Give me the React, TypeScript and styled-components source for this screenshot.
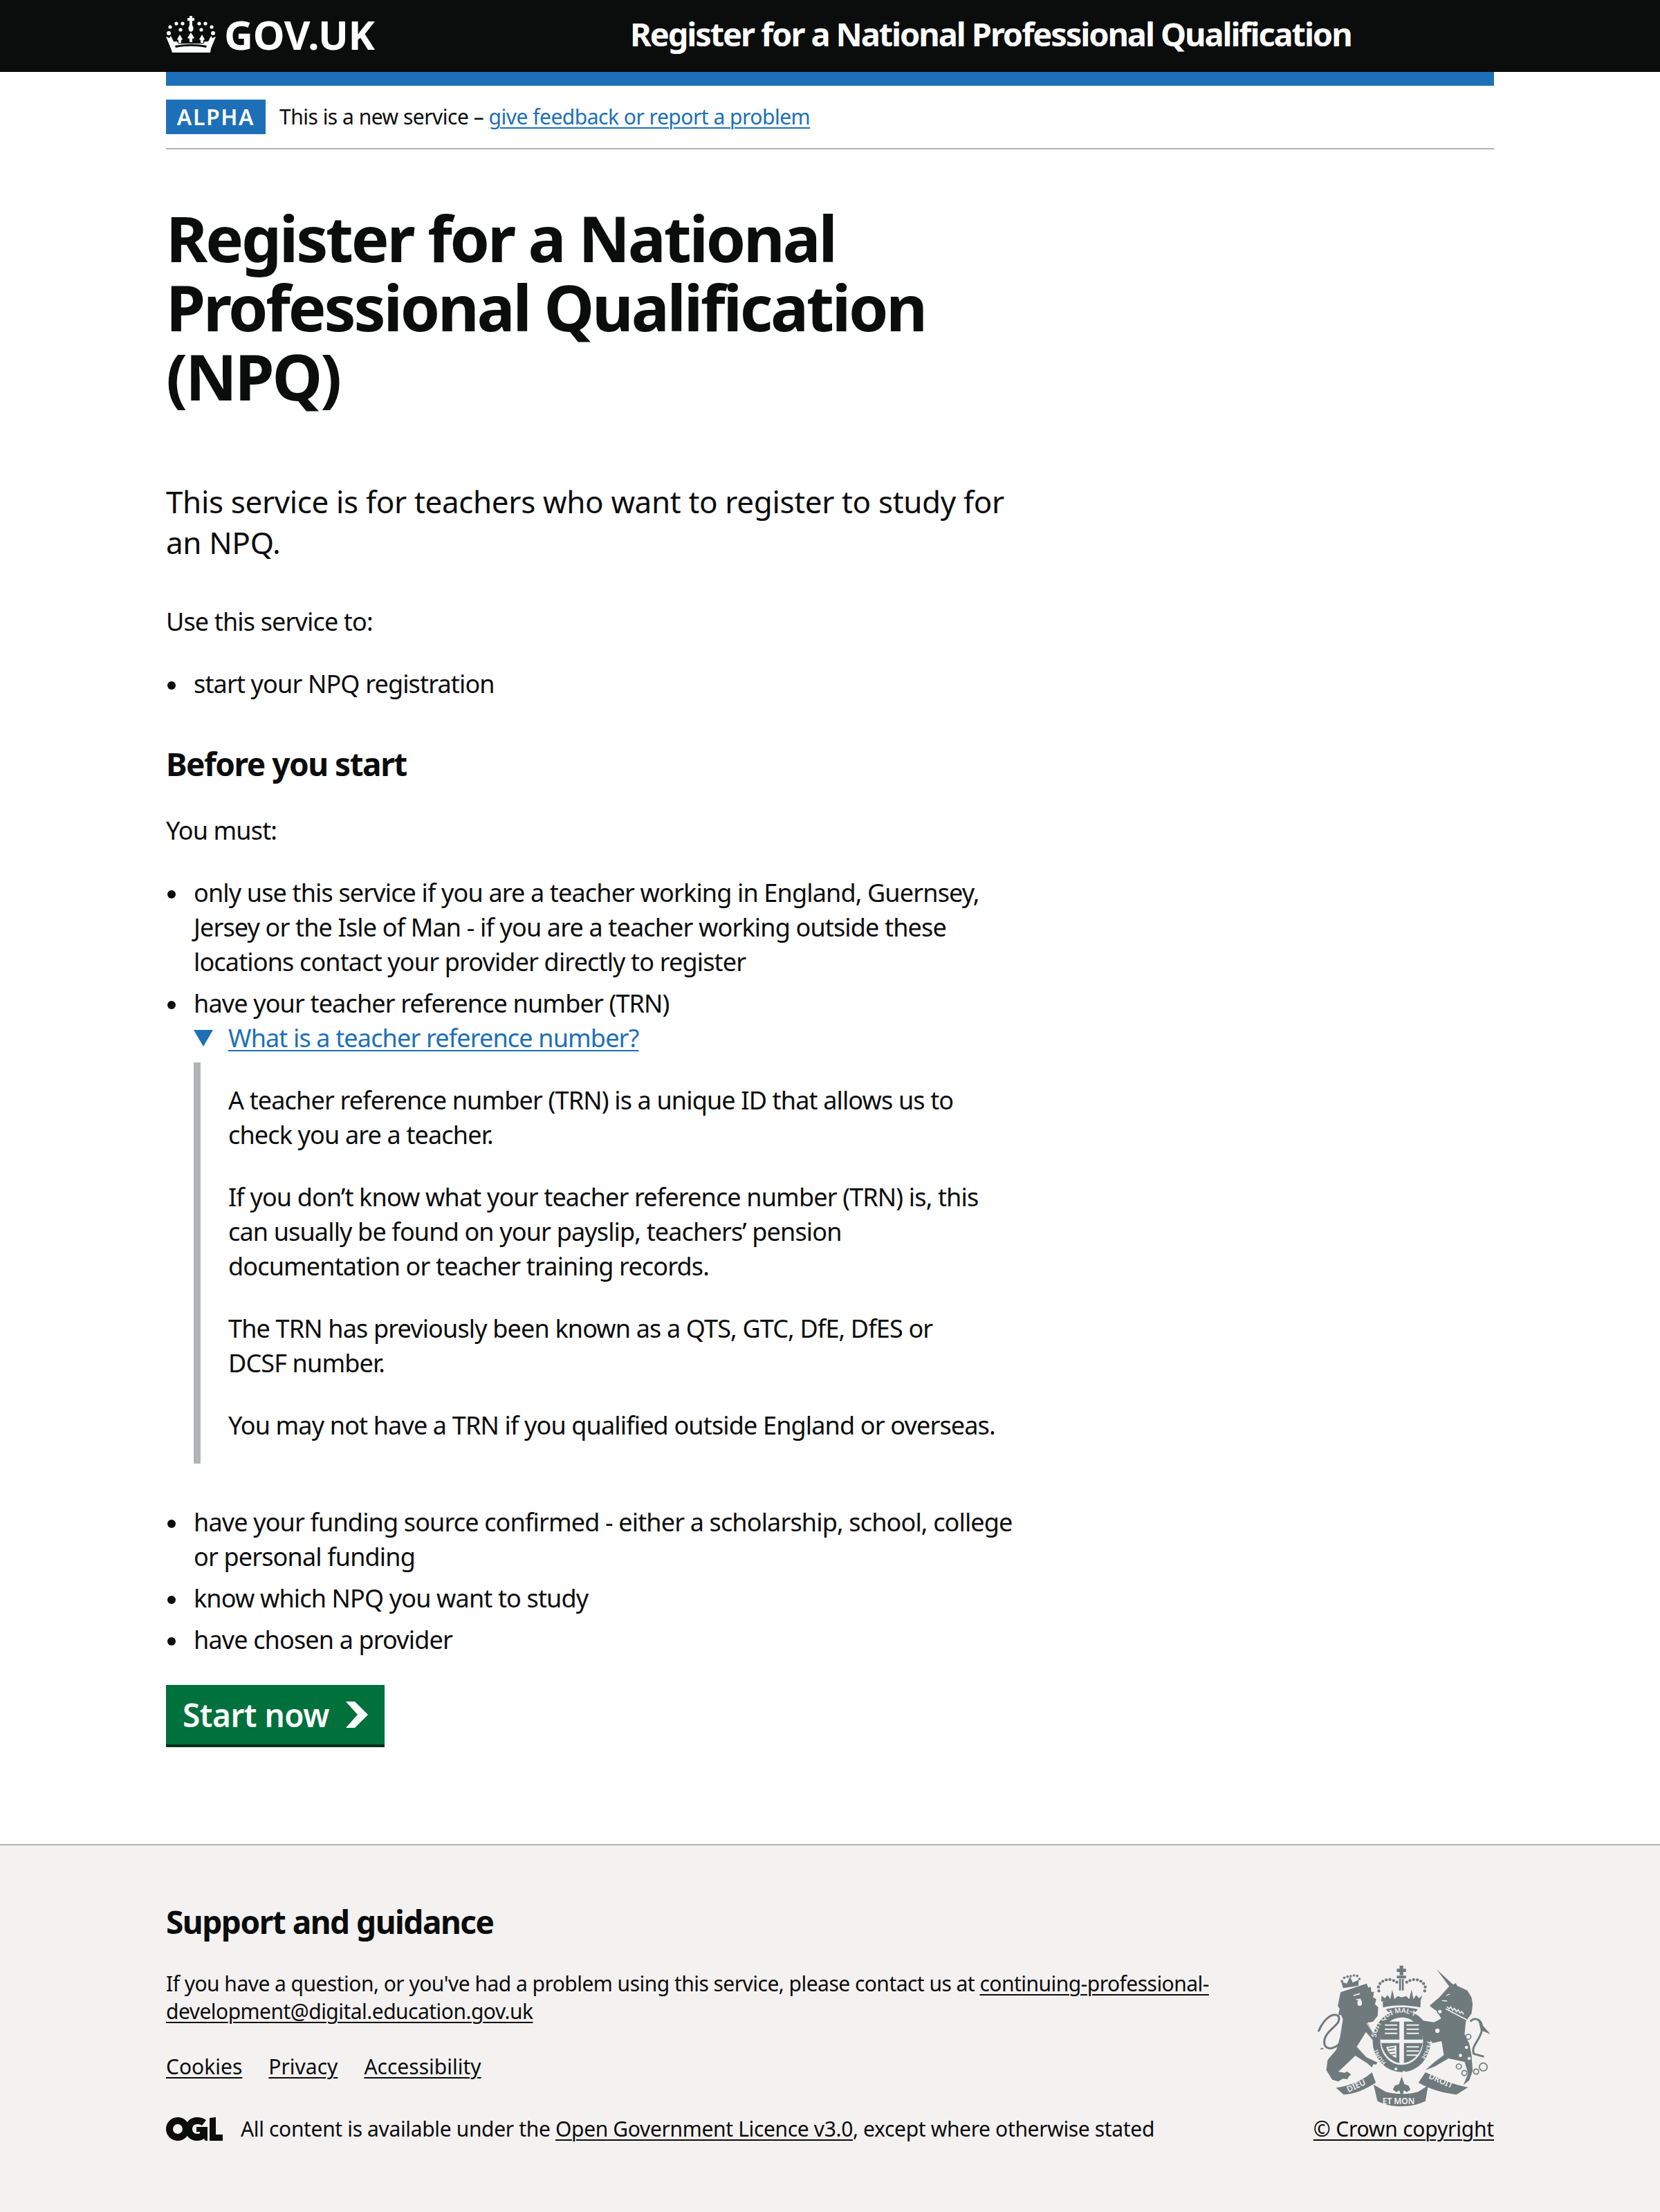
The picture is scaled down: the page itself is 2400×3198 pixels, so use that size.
import React from "react";
import styled, { createGlobalStyle } from "styled-components";

const FONT = `"Noto Sans", "Open Sans", Arial, sans-serif`;
const CREST = "#6f7a7d";
const PAPER = "#f3f2f1";

const GlobalStyle = createGlobalStyle`
  html, body {
    margin: 0;
    padding: 0;
    background: #fff;
    color: #0b0c0c;
    font-family: ${FONT};
  }
`;

const Crown = () => (
  <svg width="72" height="53" viewBox="0 0 72 53" fill="#fff">
    <rect x="34" y="0" width="4" height="14" />
    <rect x="31" y="3" width="10" height="4" />
    <ellipse cx="36" cy="18" rx="3.5" ry="5" />
    <circle cx="24" cy="11" r="2.6" />
    <circle cx="48" cy="11" r="2.6" />
    <circle cx="15" cy="11" r="2.6" />
    <circle cx="57" cy="11" r="2.6" />
    <circle cx="6" cy="16" r="2.6" />
    <circle cx="66" cy="16" r="2.6" />
    <circle cx="21" cy="20" r="2.6" />
    <circle cx="51" cy="20" r="2.6" />
    <circle cx="4" cy="25" r="3" />
    <circle cx="68" cy="25" r="3" />
    <path d="M36 24l5 8-3 1v5h-4v-5l-3-1zM20 27l4 7-2 1v4h-4v-4l-2-1zM52 27l4 7-2 1v4h-4v-4l-2-1z" />
    <path d="M0 30l5 2 2-3 2 4 2 4h5l2 3h36l2-3h5l2-4 2-4 2 3 5-2-7 17-1 6H9l-2-6zM14 46c14-3 30-3 44 0l1-3c-15-3-31-3-46 0z" fillRule="evenodd" />
  </svg>
);

const crownBeads = [
  [398, 212], [396, 195], [403, 180], [415, 170], [430, 164], [446, 163], [462, 167], [476, 174],
  [597, 212], [599, 195], [592, 180], [580, 170], [565, 164], [549, 163], [533, 167], [519, 174],
];
const lionCrownBeads = [
  [238, 170], [248, 155], [262, 150], [276, 148], [290, 145], [304, 147], [314, 160],
];
const chainRings = [
  [663, 302, 10], [652, 385, 12], [786, 411, 11], [745, 540, 11], [769, 568, 11], [820, 562, 11], [851, 542, 17],
];
const unicornSpots = [
  [778, 457], [752, 492], [790, 505],
];

const Crest = () => (
  <svg width="252" height="205" viewBox="130 100 755 615">
    <g fill={CREST}>
      {/* lion */}
      <path d="M232 218l113-38 8 18 10-4 2 22 12 0-4 24 14 8-6 22 14 12-2 38-20 25-25 5 30 50 22 14-4 10 8 12-20 4-42-50-40 65 42 45 48 22-6 10-12-2-6 14-20-18-52-33-44 42-30 28 28 4 10-6 18 14-10 8-6 12-20-2-20 12-26-8-26-42 6-44 38-44 16-56 12-76-8-18-12 0 6-28-8-12z" />
      <path d="M243 200l-8-28 24 8 14-30 12 26 26-12-2 26z" />
      <path d="M230 440c-50 42-84 14-62-32 26-42 66-52 56-84-14-20-58-6-88 64" fill="none" stroke={CREST} strokeWidth="9" />
      <path d="M150 458l-8 8 20-2zM140 388l-8 0 22-32z" />
      {lionCrownBeads.map(([cx, cy]) => (
        <circle key={`lion-${cx}`} cx={cx} cy={cy} r="5.500" />
      ))}
      <path d="M288 232l28-8M300 250l20-2" stroke={PAPER} strokeWidth="5" fill="none" />
      <ellipse cx="315" cy="264" rx="10" ry="13" fill={PAPER} />
      <path d="M345 352l42 62" stroke={PAPER} strokeWidth="3" fill="none" />
      {/* unicorn */}
      <path d="M648 118l78 72-20 6z" />
      <path d="M660 240l40-45 32-17 6 12 44 20 18 30 5 30-5 40-25 35-5 55 20 40 10 50 5 70-15 40-25 20 20-50-15-50-70-15-60 35-40 15 40-35 40-30-10-60-40 8-30-48-22-40-10-14 30 6 40 6 30-16-16-30-22-16-12-10z" />
      <path d="M795 345c20-25 55-5 50 35-5 45-50 70-35 105l44 12" fill="none" stroke={CREST} strokeWidth="9" />
      <path d="M830 340l52 60-42-18z" />
      <path d="M688 290l92 48M694 280l8 10 8-8 8 14 8-8 8 14 8-8 8 14 8-6 8 12" stroke={PAPER} strokeWidth="5" fill="none" />
      <path d="M690 232l16-6M672 254l22 2" stroke={PAPER} strokeWidth="4" fill="none" />
      {chainRings.map(([cx, cy, r]) => (
        <circle key={`ring-${cx}`} cx={cx} cy={cy} r={r} fill={PAPER} stroke={CREST} strokeWidth="5" />
      ))}
      {unicornSpots.map(([cx, cy]) => (
        <circle key={`spot-${cx}`} cx={cx} cy={cy} r="7" fill={PAPER} />
      ))}
      {/* crown over the shield */}
      <path d="M488 102h16v14h12v14h-12v14h-16v-14h-12v-14h12zM476 146h40v12h-40zM486 160h8v50h-8zM498 160h8v50h-8z" />
      <path d="M415 258c50-14 114-14 165 0l-2 26c-55-12-115-12-162 0z" />
      <path d="M410 232l14 12 12-14 12 18 8-42 10 42 14-14 18 6 18-6 14 14 10-42 8 42 12-18 12 14 14-12-8 26c-55-10-115-10-170 0z" />
      <path d="M428 292c45-12 95-12 140 0l-12 12c-38-7-76-7-116 0z" />
      {crownBeads.map(([cx, cy]) => (
        <circle key={`${cx}-${cy}`} cx={cx} cy={cy} r="6.5" />
      ))}
      {/* garter */}
      <ellipse cx="497" cy="430" rx="126" ry="134" />
      <ellipse cx="497" cy="430" rx="93" ry="103" fill={PAPER} />
      <path d="M415 345h72v78h-81c0-30 2-58 9-78zM507 345h72c7 20 9 48 9 78h-81zM408 438h79v87c-40-8-70-40-79-87zM507 438h81c-9 47-39 79-81 87z" />
      <path d="M424 360h54M424 378h54M424 396h54M518 360h54M518 378h54M518 396h54M518 455h54M518 473h54M518 491h54" stroke={PAPER} strokeWidth="6" fill="none" />
      <path d="M430 455l44-6 0 54c-24-10-38-26-44-48z" fill={PAPER} />
      <path d="M440 462l26-4M442 476l26-4M448 490l22-3" stroke={CREST} strokeWidth="5" fill="none" />
      <circle cx="472" cy="551" r="6" fill={PAPER} />
      <circle cx="507" cy="565" r="6" fill={PAPER} />
      {/* scroll and fleur-de-lys */}
      <path d="M212 632c58-7 118-32 156-67l17 45c-45 30-95 50-140 52z" />
      <path d="M375 618l53 32c42 12 102 12 140 0l44-28-12 68c-60 30-150 30-208 0z" />
      <path d="M570 610l30-45c60 25 120 55 185 65l-50 32c-55-7-115-22-165-52z" />
      <path d="M497 583l12 34 18 6 8 18-16 10-12-8-4 14-6 6-6-6-4-14-12 8-16-10 8-18 18-6z" />
    </g>
    <g fill={PAPER} fontFamily={FONT} fontWeight="600">
      <defs>
        <path id="garter-top" d="M386 425a111 118 0 0 1 222 0" />
        <path id="garter-right" d="M608 430a111 118 0 0 1-50 96" />
        <path id="garter-left" d="M430 522a111 118 0 0 1-44-78" />
      </defs>
      <text fontSize="30">
        <textPath href="#garter-top" startOffset="3%">SOIT QUI MAL Y</textPath>
      </text>
      <text fontSize="26">
        <textPath href="#garter-right">PENSE</textPath>
      </text>
      <text fontSize="26">
        <textPath href="#garter-left">HONI</textPath>
      </text>
      <text x="266" y="653" fontSize="36" transform="rotate(-25 266 653)">DIEU</text>
      <text x="414" y="702" fontSize="36">ET MON</text>
      <text x="612" y="590" fontSize="36" transform="rotate(24 612 590)">DROIT</text>
    </g>
  </svg>
);

const Ogl = () => (
  <svg width="82" height="34" viewBox="0 0 82 34" fill="#0b0c0c">
    <path fillRule="evenodd" d="M17 0a17 17 0 100 34 17 17 0 000-34zm0 10a7 7 0 110 14 7 7 0 010-14z" />
    <path d="M45 0c5 0 9 1.500 13 4l-6 8c-2-1.500-4-2-7-2-4 0-7 3-7 7s3 7 7 7c2 0 3 0 4-1v-2h-5v-7h16v20h-3l-2-3c-3 2-6 3-10 3-10 0-17-7-17-17S35 0 45 0z" />
    <path d="M63 1l9-1v25h10v9H63z" />
  </svg>
);

const Header = styled.header`
  background: #0b0c0c;
  height: 104px;
`;

const Container = styled.div`
  width: 1920px;
  margin: 0 auto;
`;

const HeaderInner = styled(Container)`
  display: flex;
  align-items: center;
  height: 98px;
`;

const Logo = styled.div`
  width: 671px;
  display: flex;
  align-items: center;
  gap: 12px;
  color: #fff;
  font-size: 58px;
  font-weight: 700;
  letter-spacing: -0.3px;
`;

const ServiceName = styled.div`
  color: #fff;
  font-size: 47px;
  font-weight: 700;
  letter-spacing: -2.1px;
`;

const BlueBar = styled(Container)`
  height: 20px;
  background: #1d70b8;
`;

const PhaseBanner = styled(Container)`
  display: flex;
  align-items: center;
  gap: 20px;
  padding: 20px 0;
  border-bottom: 2px solid #b1b4b6;
  font-size: 30px;
  line-height: 50px;
  letter-spacing: -0.5px;
`;

const PhaseTag = styled.strong`
  background: #1d70b8;
  color: #fff;
  height: 50px;
  width: 144px;
  text-align: center;
  font-size: 32px;
  font-weight: 600;
  letter-spacing: 1.6px;
`;

const Main = styled(Container)`
  padding: 78px 0 144px;
`;

const Column = styled.div`
  width: 1240px;
`;

const Title = styled.h1`
  margin: 0 0 102px;
  font-size: 92px;
  line-height: 100px;
  font-weight: 700;
  letter-spacing: -3.2px;
`;

const Lead = styled.p`
  margin: 0 0 60px;
  font-size: 44px;
  line-height: 59px;
  letter-spacing: -0.35px;
`;

const Para = styled.p`
  margin: 0 0 40px;
  font-size: 36px;
  line-height: 50px;
  letter-spacing: -0.85px;
`;

const SubHeading = styled.h2`
  margin: 60px 0 42px;
  font-size: 46px;
  line-height: 60px;
  font-weight: 700;
  letter-spacing: -1.5px;
`;

const List = styled.ul`
  margin: 0 0 40px;
  padding: 0 0 0 40px;
  list-style: none;
  font-size: 36px;
  line-height: 50px;
  letter-spacing: -0.85px;
`;

const Item = styled.li<{ $tight?: boolean }>`
  position: relative;
  margin-bottom: ${(p) => (p.$tight ? 0 : 10)}px;

  &::before {
    content: "";
    position: absolute;
    left: -38px;
    top: 21px;
    width: 12px;
    height: 12px;
    border-radius: 50%;
    background: #0b0c0c;
  }
`;

const Details = styled.div`
  margin-bottom: 60px;
`;

const Summary = styled.div`
  display: flex;
  align-items: center;
  gap: 22px;
  height: 50px;
  color: #1d70b8;
`;

const Underlined = styled.a<{ $blue?: boolean }>`
  color: ${(p) => (p.$blue ? "#1d70b8" : "inherit")};
  text-decoration: underline;
  text-decoration-thickness: 2px;
  text-underline-offset: 4px;
`;

const DetailsText = styled.div`
  margin-top: 10px;
  padding: 30px 40px 30px 40px;
  border-left: 10px solid #b1b4b6;

  p {
    margin: 0 0 40px;
  }

  p:last-child {
    margin-bottom: 0;
  }
`;

const StartButton = styled.a`
  display: inline-flex;
  align-items: center;
  gap: 24px;
  box-sizing: border-box;
  width: 316px;
  height: 86px;
  padding-left: 24px;
  background: #00703c;
  box-shadow: 0 4px 0 #002d18;
  color: #fff;
  font-size: 46px;
  font-weight: 600;
  letter-spacing: -0.5px;
`;

const Footer = styled.footer`
  background: #f3f2f1;
  border-top: 2px solid #b1b4b6;
  height: 532px;
  box-sizing: border-box;
  padding-top: 80px;
  font-size: 30px;
  line-height: 40px;
`;

const FooterRow = styled(Container)`
  display: flex;
  justify-content: space-between;
  align-items: flex-end;
`;

const FooterLeft = styled.div`
  width: 1540px;
`;

const FooterHeading = styled.h2`
  margin: 0 0 40px;
  font-size: 46px;
  line-height: 60px;
  font-weight: 700;
  letter-spacing: -1.5px;
`;

const FooterText = styled.p`
  margin: 0 0 40px;
  letter-spacing: -0.53px;
`;

const FooterLinks = styled.div`
  display: flex;
  gap: 38px;
  margin-bottom: 50px;
`;

const Licence = styled.div`
  display: flex;
  align-items: center;
  gap: 26px;
  letter-spacing: -0.35px;
`;

const CrestColumn = styled.div`
  display: flex;
  flex-direction: column;
  align-items: flex-end;
  gap: 12px;
  letter-spacing: -0.2px;

  svg {
    margin-right: 4px;
  }
`;

export default function App() {
  return (
    <>
      <GlobalStyle />
      <Header>
        <HeaderInner>
          <Logo>
            <Crown />
            GOV.UK
          </Logo>
          <ServiceName>Register for a National Professional Qualification</ServiceName>
        </HeaderInner>
      </Header>
      <BlueBar />
      <PhaseBanner>
        <PhaseTag>ALPHA</PhaseTag>
        <span>
          This is a new service – <Underlined $blue>give feedback or report a problem</Underlined>
        </span>
      </PhaseBanner>
      <Main>
        <Column>
          <Title>Register for a National Professional Qualification (NPQ)</Title>
          <Lead>This service is for teachers who want to register to study for an NPQ.</Lead>
          <Para>Use this service to:</Para>
          <List>
            <Item>start your NPQ registration</Item>
          </List>
          <SubHeading>Before you start</SubHeading>
          <Para>You must:</Para>
          <List>
            <Item>
              only use this service if you are a teacher working in England, Guernsey, Jersey or the Isle of Man - if you
              are a teacher working outside these locations contact your provider directly to register
            </Item>
            <Item $tight>
              have your teacher reference number (TRN)
              <Details>
                <Summary>
                  <svg width="28" height="24" viewBox="0 0 28 24">
                    <path d="M0 0h28L14 24z" fill="#1d70b8" />
                  </svg>
                  <Underlined>What is a teacher reference number?</Underlined>
                </Summary>
                <DetailsText>
                  <p>A teacher reference number (TRN) is a unique ID that allows us to check you are a teacher.</p>
                  <p>
                    If you don’t know what your teacher reference number (TRN) is, this can usually be found on your
                    payslip, teachers’ pension documentation or teacher training records.
                  </p>
                  <p>The TRN has previously been known as a QTS, GTC, DfE, DfES or DCSF number.</p>
                  <p>You may not have a TRN if you qualified outside England or overseas.</p>
                </DetailsText>
              </Details>
            </Item>
            <Item>have your funding source confirmed - either a scholarship, school, college or personal funding</Item>
            <Item>know which NPQ you want to study</Item>
            <Item>have chosen a provider</Item>
          </List>
          <StartButton>
            Start now
            <svg width="32" height="38" viewBox="0 0 32 38">
              <path d="M0 0h13l19 19-19 19H0l17-19z" fill="#fff" />
            </svg>
          </StartButton>
        </Column>
      </Main>
      <Footer>
        <FooterRow>
          <FooterLeft>
            <FooterHeading>Support and guidance</FooterHeading>
            <FooterText>
              If you have a question, or you've had a problem using this service, please contact us at{" "}
              <Underlined>continuing-professional-development@digital.education.gov.uk</Underlined>
            </FooterText>
            <FooterLinks>
              <Underlined>Cookies</Underlined>
              <Underlined>Privacy</Underlined>
              <Underlined>Accessibility</Underlined>
            </FooterLinks>
            <Licence>
              <Ogl />
              <span>
                All content is available under the <Underlined>Open Government Licence v3.0</Underlined>, except where
                otherwise stated
              </span>
            </Licence>
          </FooterLeft>
          <CrestColumn>
            <Crest />
            <Underlined>© Crown copyright</Underlined>
          </CrestColumn>
        </FooterRow>
      </Footer>
    </>
  );
}
